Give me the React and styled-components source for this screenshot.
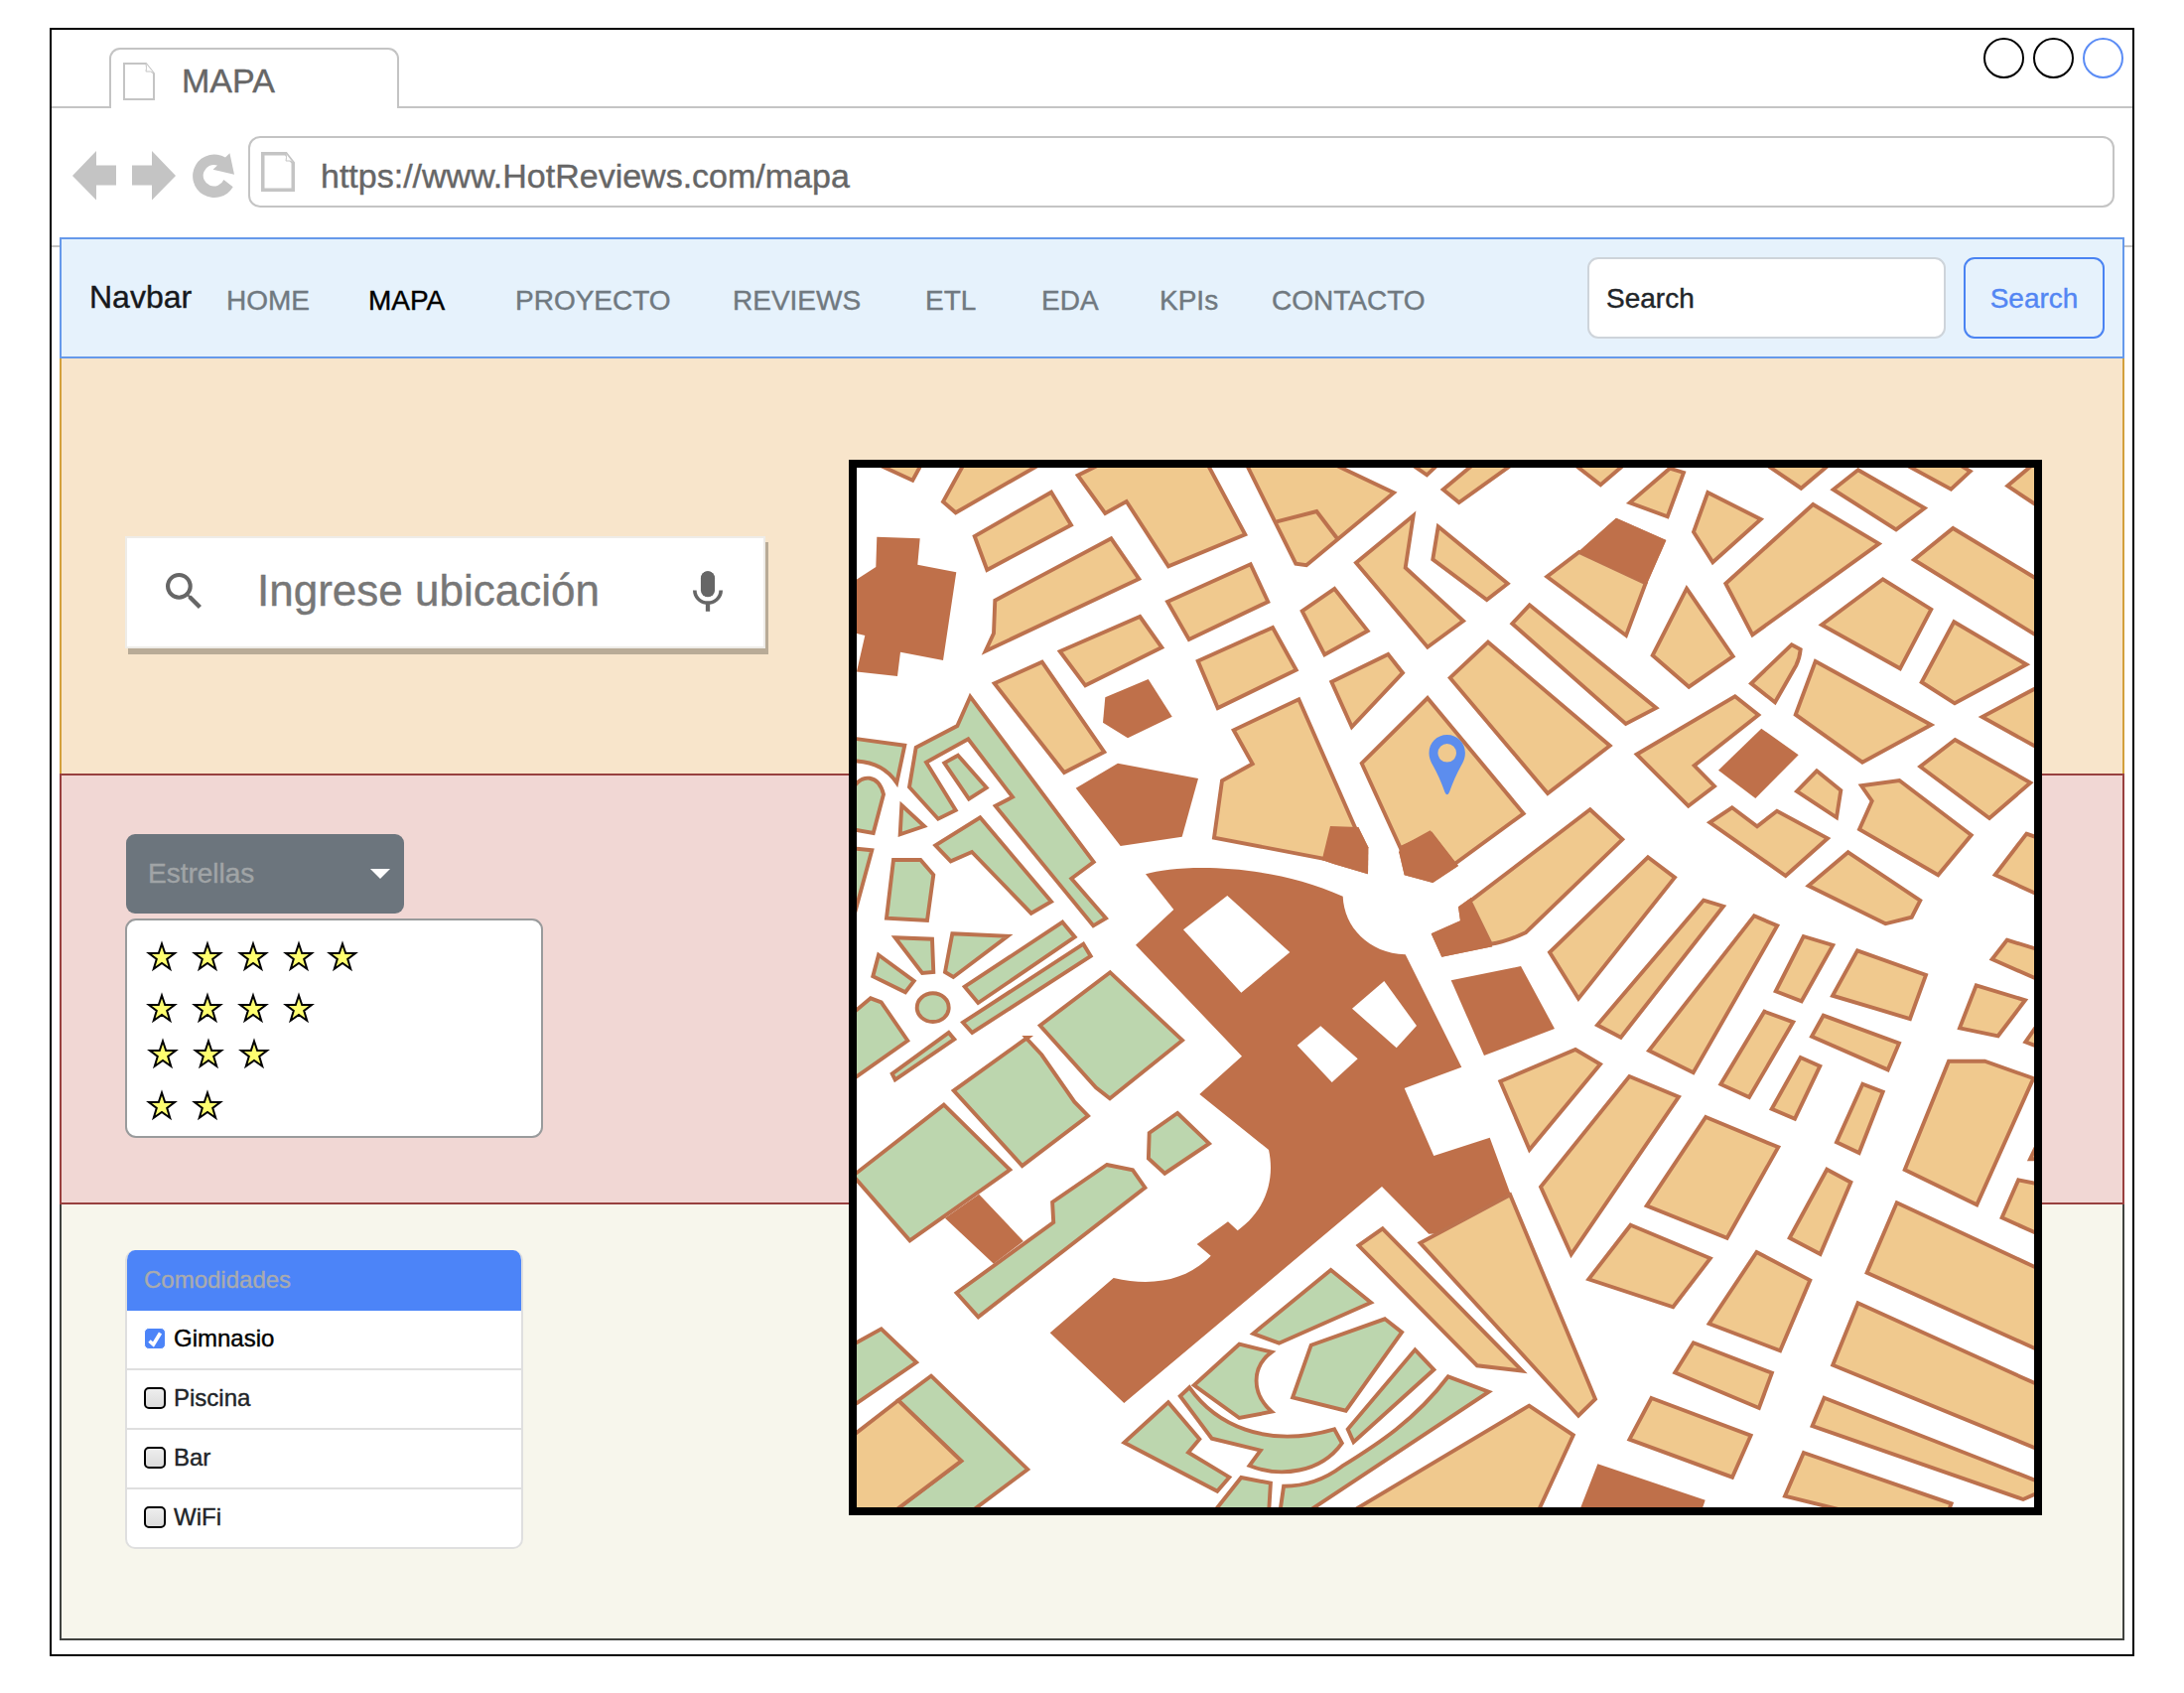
import React from "react";
import styled, { createGlobalStyle } from "styled-components";

const GlobalStyle = createGlobalStyle`
  *, *::before, *::after { box-sizing: border-box; }
  body {
    margin: 0;
    background: #ffffff;
    font-family: "Liberation Sans", Arial, Helvetica, sans-serif;
    -webkit-text-stroke: 0.4px;
  }
`;

/* ---------- Browser window ---------- */

const Page = styled.div`
  width: 2200px;
  height: 1705px;
  padding: 28px 50px 0;
  overflow: hidden;
`;

const BrowserWindow = styled.div`
  display: flex;
  flex-direction: column;
  height: 1640px;
  border: 2px solid #000;
  background: #fff;
`;

const TabStrip = styled.div`
  display: flex;
  align-items: flex-end;
  height: 79px;
`;

const StripStart = styled.div`
  width: 58px;
  border-bottom: 2px solid #c4c4c4;
`;

const Tab = styled.div`
  display: flex;
  align-items: center;
  width: 292px;
  height: 61px;
  padding: 4px 0 0 12px;
  border: 2px solid #c4c4c4;
  border-bottom: 0;
  border-radius: 11px 11px 0 0;
`;

const TabTitle = styled.span`
  margin: -1px 0 0 27px;
  font-size: 34px;
  line-height: 40px;
  color: #666;
`;

const StripEnd = styled.div`
  flex: 1;
  align-self: stretch;
  display: flex;
  justify-content: flex-end;
  gap: 9px;
  padding: 8px 9px 0 0;
  border-bottom: 2px solid #c4c4c4;
`;

const WindowButton = styled.span`
  width: 41px;
  height: 41px;
  border: 2px solid ${(p) => p.$color};
  border-radius: 50%;
`;

const Toolbar = styled.div`
  display: flex;
  align-items: flex-start;
  height: 140px;
  padding: 28px 18px 0 21px;
  border-bottom: 2px solid #c4c4c4;
`;

const ToolIcon = styled.svg`
  display: block;
  flex: none;
  margin-top: 15px;
  margin-right: ${(p) => p.$gap}px;
  fill: #c4c4c4;
`;

const AddressBar = styled.div`
  flex: 1;
  display: flex;
  align-items: center;
  height: 72px;
  padding-left: 11px;
  border: 2px solid #c4c4c4;
  border-radius: 12px;
`;

const Address = styled.span`
  margin: 8px 0 0 26px;
  font-size: 34px;
  line-height: 40px;
  color: #666;
`;

const DocSvg = styled.svg`
  display: block;
  flex: none;
  fill: #fff;
  stroke: #c4c4c4;
`;

function DocIcon({ width, height, weight }) {
  const h = weight / 2;
  return (
    <DocSvg width={width} height={height}>
      <path
        strokeWidth={weight}
        d={`M${h} ${h} H${width - 9} L${width - h} 11 V${height - h} H${h} Z`}
      />
      <path
        strokeWidth="1"
        d={`M${width - 9} ${h} Q${width - 8} 6 ${width - 9} 9 Q${width - 4} 8 ${width - h} 11`}
      />
    </DocSvg>
  );
}

/* ---------- Site ---------- */

const Site = styled.div`
  position: relative;
  display: flex;
  flex-direction: column;
  flex: none;
  width: 2080px;
  margin: -10px 0 0 8px;
`;

const Navbar = styled.nav`
  display: flex;
  align-items: flex-start;
  height: 122px;
  padding: 18px 18px 0 28px;
  border: 2px solid #6699ea;
  background: #e6f2fc;
`;

const Brand = styled.span`
  width: 138px;
  padding-top: 20px;
  font-size: 32px;
  line-height: 40px;
  color: #16191c;
`;

const NavLink = styled.span`
  width: ${(p) => p.$width}px;
  padding-top: 24px;
  font-size: 28px;
  line-height: 40px;
  white-space: nowrap;
  color: ${(p) => (p.$active ? "#000" : "#707980")};
`;

const SearchField = styled.div`
  width: 361px;
  height: 82px;
  margin-left: auto;
  padding: 19px 17px;
  border: 2px solid #ced4da;
  border-radius: 11px;
  background: #fff;
  font-size: 28px;
  line-height: 42px;
  color: #212529;
`;

const SearchButton = styled.div`
  width: 142px;
  height: 82px;
  margin-left: 18px;
  padding-top: 19px;
  border: 2px solid #4a83f2;
  border-radius: 11px;
  font-size: 28px;
  line-height: 42px;
  text-align: center;
  color: #5386f3;
`;

const LocationSection = styled.section`
  height: 418px;
  padding: 179px 0 0 64px;
  border: solid #d3a03c;
  border-width: 0 2px;
  background: #f8e5cb;
`;

const RatingSection = styled.section`
  height: 434px;
  padding: 59px 0 0 65px;
  border: 2px solid #98403f;
  background: #f1d7d4;
`;

const AmenitySection = styled.section`
  height: 439px;
  padding: 46px 0 0 64px;
  border: solid #40423f;
  border-width: 0 2px 2px;
  background: #f7f6ec;
`;

const LocationBox = styled.div`
  display: flex;
  align-items: center;
  width: 645px;
  height: 113px;
  padding: 0 41px 0 39px;
  border: 2px solid #eeece8;
  background: #fff;
  box-shadow: 3px 6px 0 #b9ab97;
`;

const LocationText = styled.span`
  flex: 1;
  margin-left: 56px;
  padding-bottom: 4px;
  font-size: 44px;
  line-height: 52px;
  color: #777;
`;

const GlyphIcon = styled.svg`
  display: block;
  flex: none;
  margin-bottom: 3px;
  fill: #666;
`;

const Dropdown = styled.div`
  display: flex;
  align-items: center;
  justify-content: space-between;
  width: 280px;
  height: 80px;
  padding: 0 14px 1px 22px;
  border-radius: 9px;
  background: #6c757d;
  font-size: 28px;
  color: #a0a4a6;
`;

const StarPanel = styled.div`
  width: 421px;
  height: 221px;
  margin: 5px 0 0 -1px;
  padding: 20px 0 0 19px;
  border: 2px solid #999b9c;
  border-radius: 11px;
  background: #fff;
`;

const StarRow = styled.div`
  display: flex;
  gap: 14px;
  height: 32px;
  margin-bottom: ${(p) => p.$after}px;
  margin-left: ${(p) => p.$indent || 0}px;
`;

const StarSvg = styled.svg`
  display: block;
  overflow: visible;
  fill: #ffff70;
  stroke: #000;
  stroke-width: 2;

  &:nth-child(5) { margin-left: -2px; }
`;

const AmenityList = styled.div`
  width: 401px;
  height: 301px;
  overflow: hidden;
  border: 2px solid #dfdfdf;
  border-top: 0;
  border-radius: 10px;
  background: #fff;
`;

const AmenityHeader = styled.div`
  height: 61px;
  margin: 0 -2px;
  padding: 10px 0 0 19px;
  background: #4c84f8;
  font-size: 24px;
  line-height: 40px;
  color: #a9abae;
`;

const AmenityRow = styled.div`
  display: flex;
  align-items: center;
  gap: 8px;
  height: 60px;
  padding: 0 0 2px 17px;
  border-bottom: 2px solid #dfdfdf;
  font-size: 24px;
  color: ${(p) => (p.$checked ? "#000" : "#212529")};

  &:last-child { border-bottom-color: transparent; }
`;

const CheckBox = styled.span`
  display: flex;
  width: 22px;
  height: 22px;
  border: ${(p) => (p.$checked ? "1px solid #fff" : "2px solid #000")};
  border-radius: 5px;
  background: ${(p) => (p.$checked ? "#4c84f8" : "linear-gradient(#eee, #dcdcdc)")};
`;

/* ---------- Map ---------- */

const MapFrame = styled.div`
  position: absolute;
  left: 795px;
  top: 224px;
  width: 1202px;
  height: 1063px;
  border: 8px solid #000;
  background: #fff;
`;

const MapSvg = styled.svg`
  display: block;
  width: 1186px;
  height: 1047px;

  .block { fill: #f0c98e; stroke: #bc724e; stroke-width: 3.9; }
  .park { fill: #bcd6ae; stroke: #bc724e; stroke-width: 3.9; }
  .civic { fill: #bf704a; }
  .court { fill: #fff; }
  .line { fill: none; stroke: #bc724e; stroke-width: 3.9; }
`;

/* Each sheet holds its shapes in its own units: origin (x, y), sx and sy units per pixel. */
const SHEETS = [
  {
    x: 850, y: 455, sx: 3, sy: 3,
    block: [
      "90,32 208,86 244,20",
      "372,20 300,151 338,184 624,20",
      "627,122 687,221 433,357 395,255",
      "808,262 892,384 428,602 453,548 457,449",
      "810,20 707,71 790,186 854,150 981,346 1213,250 1090,20",
      "978,453 1229,340 1282,453 1043,567",
      "895,498 961,591 730,706 653,603",
      "599,635 787,907 666,969 455,700",
      "1296,531 1367,659 1130,774 1070,632",
      "1375,748 1547,1140 1545,1150 1460,1231 1119,1166 1143,994 1235,943 1178,841",
    ],
    civic: [
      "790,742 920,687 992,800 858,865 783,818",
      "701,1016 828,941 1071,987 1022,1163 836,1191",
      "100,257 230,262 223,341 340,364 300,630 171,605 162,678 20,662 39,664 64,555 20,545 20,398 97,348",
    ],
    park: [
      "M20 865 L184 887 L160 1000 C130 955 85 933 20 934 Z",
      "M25 1020 C55 970 105 975 120 1035 L89 1152 L20 1140 Z",
      "382,740 343,828 218,893 198,1013 285,1109 338,1083 249,938 376,868 510,1043 458,1070 754,1432 792,1409 688,1289 755,1239",
      "345,917 431,1015 378,1049 304,940",
    ],
  },
  {
    x: 1250, y: 455, sx: 3, sy: 3,
    block: [
      "8,20 166,338 198,343 462,124 240,18",
      "490,20 562,70 615,20",
      "724,20 611,114 659,153 845,20",
      "521,193 348,335 564,590 672,511 497,350",
      "596,226 806,398 743,447 580,325",
      "283,414 383,541 253,613 185,481",
      "445,612 489,668 335,831 274,695",
      "872,463 1255,774 1163,822 820,519",
      "747,575 1115,888 927,1032 632,683",
      "1022,303 1223,397 1164,555 925,377",
      "985,20 1087,100 1180,20",
    ],
    civic: ["1134,200 1285,267 1227,399 1019,303"],
    line: ["M108 211 L229 180 L291 262"],
  },
  {
    x: 1650, y: 455, sx: 3, sy: 3,
    block: [
      "96,50 138,63 89,196 -25,154",
      "211,123 371,204 226,334 168,242",
      "147,413 287,618 154,710 44,615",
      "529,159 728,278 346,553 265,398",
      "360,20 493,110 600,20",
      "665,55 866,170 780,235 590,114",
      "775,20 946,113 1004,59 940,20",
      "1215,20 1117,103 1240,185",
      "952,231 1240,405 1240,577 834,326",
      "740,385 886,476 792,655 555,523",
      "955,514 1174,643 957,760 857,696",
      "M464 583 L491 597 Q488 625 478 645 L414 757 L342 700 Z",
      "536,633 886,825 678,938 476,794",
      "1240,694 1040,801 1240,912",
      "958,870 1186,1000 1062,1107 853,951",
      "293,739 364,795 170,948 231,1010 152,1070 -4,914",
      "540,964 613,1023 600,1105 480,1026",
    ],
    civic: ["373,836 485,916 355,1047 243,962"],
  },
  {
    x: 850, y: 800, sx: 3, sy: 3,
    park: [
      "175,33 243,96 170,121",
      "412,70 627,324 566,359 387,174 323,202 277,154",
      "85,169 30,370 10,370 10,161",
      "150,198 232,198 271,243 252,381 129,374",
      "155,433 267,437 271,537 237,540",
      "328,421 495,428 331,552 306,537",
      "105,485 212,564 186,598 88,550",
      "M221 644 C221 620 243 601 269 601 C296 601 317 620 317 644 C317 668 296 687 269 687 C243 687 221 668 221 644 Z",
      "661,386 698,431 406,630 365,581",
      "724,452 746,489 388,720 360,689",
      "317,720 334,740 155,862 146,844",
      "10,675 81,616 113,628 193,744 10,873",
      "805,538 1023,743 804,919 762,886 593,698",
      "552,737 598,787 697,929 738,971 539,1122 332,895",
    ],
    civic: ["538,729 573,729 553,745"],
  },
  {
    x: 1250, y: 800, sx: 3, sy: 3,
    block: [
      "564,-291 854,58 645,211 575,120 482,162 365,-94",
      "M1055 46 L1153 136 L860 418 Q800 446 755 452 L692 323 Z",
      "1230,190 1311,251 1020,617 933,477",
      "1011,771 1086,815 872,1073 784,867",
    ],
    civic: [
      "M-288 241 C-190 212 80 205 308 308 C312 400 385 480 497 484 L667 824 L494 888 L583 1092 L752 1037 L814 1205 L600 1327 L568 1328 L426 1185 L-353 1839 L-577 1627 L-385 1461 C-260 1490 -160 1465 -91 1394 L-133 1359 L-39 1291 L-10 1318 C70 1260 105 1170 84 1074 L-125 906 L3 791 L-318 455 L-203 348 Z",
      "270,96 355,99 385,160 384,241 280,210 245,198",
      "482,158 572,109 657,216 580,267 494,244 478,175",
      "657,340 696,312 698,330 760,460 607,491 575,421 663,382",
      "635,562 846,519 948,708 735,789",
    ],
    court: [
      "-41,306 148,477 1,599 -174,409",
      "433,564 531,699 470,766 336,647",
      "241,700 353,799 275,870 170,758",
    ],
  },
  {
    x: 1650, y: 800, sx: 3, sy: 3,
    block: [
      "198,320 258,338 -52,734 -123,697",
      "351,367 421,397 167,841 33,774",
      "-26,852 123,914 -202,1390 -294,1186",
      "205,975 424,1066 269,1340 26,1243",
      "1210,1050 1185,1102 1240,1102",
      "939,806 1048,806 1195,858 1024,1240 806,1134",
      "675,-26 790,-42 1007,123 907,244 669,106 707,20",
      "284,40 360,97 420,50 573,133 446,246 217,85",
      "635,175 853,321 827,371 748,391 515,276",
      "1174,119 1240,142 1240,317 1079,243",
      "1115,440 1240,478 1240,573 1070,498",
      "1022,577 1170,622 1088,730 972,706",
      "1230,664 1171,748 1240,775",
      "663,472 870,546 822,678 588,608",
      "500,429 589,456 494,625 416,595",
      "560,668 789,752 755,832 525,731",
      "382,656 469,688 336,915 250,876",
      "491,795 550,821 474,980 404,950",
      "679,875 740,899 668,1083 600,1051",
    ],
  },
  {
    x: 850, y: 1150, sx: 2.5705, sy: 3,
    civic: ["350,158 465,300 388,368 262,230"],
    park: [
      "259,-112 430,84 171,298 24,102",
      "864,-87 946,5 831,95 789,50 791,-27",
      "681,69 748,85 780,138 348,529 292,456 543,243 540,182",
      "10,621 97,565 188,666 10,808",
      "226,707 476,989 315,1130 115,1130 304,964 141,781",
      "1261,387 1365,485 1127,608 1060,579",
      "1401,535 1445,575 1300,812 1162,772 1210,614",
      "1479,628 1528,688 1320,907 1305,868",
      "M1024 611 L1108 635 C1055 680 1055 760 1108 815 L1024 834 L907 735 Z",
      "M895 742 C960 850 1090 930 1270 868 L1290 910 C1235 1000 1130 1015 1050 978 L1079 932 L953 896 L871 768 Z",
      "840,787 921,898 892,938 998,1013 967,1055 726,908",
      "1029,1014 1105,1031 1100,1130 950,1130",
      "M1565 709 L1670 755 L1185 1130 L1128 1130 L1139 1040 C1190 1040 1245 1020 1290 980 C1380 915 1480 840 1565 709 Z",
    ],
    block: ["10,899 141,781 304,964 115,1130 10,1130"],
  },
  {
    x: 1450, y: 1150, sx: 2.529, sy: 3,
    block: [
      "180,160 397,777 354,827 -49,305",
      "-145,262 211,692 96,676 -206,313",
      "228,797 341,886 246,1130 -242,1130",
      "487,251 690,352 595,499 380,415",
      "808,333 944,418 868,631 687,549",
      "647,607 847,698 814,804 600,697",
      "540,774 793,887 746,1013 484,899",
      "987,83 1048,122 970,339 892,290",
      "1165,184 1600,424 1600,668 1089,395",
      "1066,487 1600,774 1600,965 1002,674",
      "980,773 1560,1042 1487,1080 950,858",
      "928,939 1304,1093 1292,1130 1085,1130 880,1070",
      "1475,115 1560,136 1560,297 1433,229",
    ],
    civic: ["403,973 677,1082 665,1125 353,1125"],
  },
];

const LAYERS = ["civic", "park", "block", "line"];

function toPath({ x, y, sx, sy }, shape) {
  const source = shape.startsWith("M") ? shape : `M${shape.replace(/ /g, " L")} Z`;
  return source.replace(
    /(-?[\d.]+)[ ,](-?[\d.]+)/g,
    (_, px, py) => `${(x + px / sx).toFixed(1)} ${(y + py / sy).toFixed(1)}`
  );
}

/* Civic buildings that stand on top of a city block. */
const OVERLAYS = [
  [4, "civic", [1, 2, 3]],
  [1, "civic", [0]],
];

function CityMap() {
  return (
    <MapFrame>
      <MapSvg viewBox="863 471 1186 1047">
        {LAYERS.map((layer) =>
          SHEETS.map((sheet, s) =>
            (sheet[layer] || []).map((shape, i) => (
              <path key={`${layer}-${s}-${i}`} className={layer} d={toPath(sheet, shape)} />
            ))
          )
        )}
        {OVERLAYS.map(([s, layer, ids]) =>
          ids.map((i) => (
            <path key={`over-${s}-${i}`} className={layer} d={toPath(SHEETS[s], SHEETS[s][layer][i])} />
          ))
        )}
        {SHEETS[4].court.map((shape) => (
          <path key={shape} className="court" d={toPath(SHEETS[4], shape)} />
        ))}
        <path
          fill="#5c8dee"
          fillRule="evenodd"
          d="M1457.7 740 C1447.5 740 1439.5 748 1439.5 758.3 C1439.5 763 1441 766.5 1443.5 771 C1448 779 1452 788 1455.5 798 Q1457.7 802.5 1459.9 798 C1463.4 788 1467.4 779 1471.9 771 C1474.4 766.5 1475.9 763 1475.9 758.3 C1475.9 748 1467.9 740 1457.7 740 Z M1457.7 749 A9.3 9.3 0 1 1 1457.7 767.6 A9.3 9.3 0 1 1 1457.7 749 Z"
        />
      </MapSvg>
    </MapFrame>
  );
}

/* ---------- Content ---------- */

const NAV_LINKS = [
  { label: "HOME", width: 143 },
  { label: "MAPA", width: 148, active: true },
  { label: "PROYECTO", width: 219 },
  { label: "REVIEWS", width: 194 },
  { label: "ETL", width: 117 },
  { label: "EDA", width: 119 },
  { label: "KPIs", width: 113 },
  { label: "CONTACTO", width: 160 },
];

const STAR_ROWS = [
  { count: 5, after: 20 },
  { count: 4, after: 14 },
  { count: 3, after: 20, indent: 1 },
  { count: 2, after: 0 },
];

const AMENITIES = [
  { label: "Gimnasio", checked: true },
  { label: "Piscina" },
  { label: "Bar" },
  { label: "WiFi" },
];

function Star() {
  return (
    <StarSvg width="32" height="32" viewBox="0 0 32 32">
      <path d="M16 3.5 L19.2 13 H29 L21.2 18.9 L24.2 28.8 L16 22.9 L7.8 28.8 L10.8 18.9 L3 13 H12.8 Z" />
    </StarSvg>
  );
}

export default function App() {
  return (
    <Page>
      <GlobalStyle />
      <BrowserWindow>
        <TabStrip>
          <StripStart />
          <Tab>
            <DocIcon width={32} height={38} weight={2} />
            <TabTitle>MAPA</TabTitle>
          </Tab>
          <StripEnd>
            <WindowButton $color="#000" />
            <WindowButton $color="#000" />
            <WindowButton $color="#5b8cf5" />
          </StripEnd>
        </TabStrip>
        <Toolbar>
          <ToolIcon $gap={16} width="44" height="50">
            <path d="M0 25 L24 0 V14.5 H44 V34.5 H24 V49.5 Z" />
          </ToolIcon>
          <ToolIcon $gap={17} width="44" height="50">
            <path d="M44 25 L20 0 V14.5 H0 V34.5 H20 V49.5 Z" />
          </ToolIcon>
          <ToolIcon $gap={14} width="42" height="50" viewBox="0 -2 42 50">
            <path d="M40.7 34.3 A21.8 21.8 0 1 1 33 4.5 L37.4 0.3 L42 21.7 L20.5 16.7 L25 12.5 A10.8 10.8 0 1 0 31.4 27 Z" />
          </ToolIcon>
          <AddressBar>
            <DocIcon width={34} height={40} weight={3.5} />
            <Address>https://www.HotReviews.com/mapa</Address>
          </AddressBar>
        </Toolbar>
        <Site>
          <Navbar>
            <Brand>Navbar</Brand>
            {NAV_LINKS.map((link) => (
              <NavLink key={link.label} $width={link.width} $active={link.active}>
                {link.label}
              </NavLink>
            ))}
            <SearchField>Search</SearchField>
            <SearchButton>Search</SearchButton>
          </Navbar>
          <LocationSection>
            <LocationBox>
              <GlyphIcon width="36" height="36" viewBox="3 3 17.5 17.5">
                <path d="M15.5 14h-.79l-.28-.27A6.471 6.471 0 0 0 16 9.5 6.5 6.5 0 1 0 9.5 16c1.61 0 3.09-.59 4.23-1.57l.27.28v.79l5 4.99L20.49 19l-4.99-5zm-6 0C7.01 14 5 11.99 5 9.5S7.01 5 9.5 5 14 7.01 14 9.5 11.99 14 9.5 14z" />
              </GlyphIcon>
              <LocationText>Ingrese ubicación</LocationText>
              <GlyphIcon width="30" height="41" viewBox="5 2 14 19">
                <path d="M12 14c1.66 0 2.99-1.34 2.99-3L15 5c0-1.66-1.34-3-3-3S9 3.34 9 5v6c0 1.66 1.34 3 3 3zm5.3-3c0 3-2.54 5.1-5.3 5.1S6.7 14 6.7 11H5c0 3.41 2.72 6.23 6 6.72V21h2v-3.28c3.28-.48 6-3.3 6-6.72h-1.7z" />
                <rect x="8.7" y="2" width="6.6" height="12.2" rx="3.3" />
              </GlyphIcon>
            </LocationBox>
          </LocationSection>
          <RatingSection>
            <Dropdown>
              Estrellas
              <svg width="20" height="10">
                <path d="M0 0 H20 L10 10 Z" fill="#fff" />
              </svg>
            </Dropdown>
            <StarPanel>
              {STAR_ROWS.map((row) => (
                <StarRow key={row.count} $after={row.after} $indent={row.indent}>
                  {Array.from({ length: row.count }, (_, i) => (
                    <Star key={i} />
                  ))}
                </StarRow>
              ))}
            </StarPanel>
          </RatingSection>
          <AmenitySection>
            <AmenityList>
              <AmenityHeader>Comodidades</AmenityHeader>
              {AMENITIES.map((item) => (
                <AmenityRow key={item.label} $checked={item.checked}>
                  <CheckBox $checked={item.checked}>
                    {item.checked && (
                      <svg width="20" height="20">
                        <path d="M4.5 12.5 L8.5 16 L15.5 4.5" fill="none" stroke="#fff" strokeWidth="3.6" />
                      </svg>
                    )}
                  </CheckBox>
                  {item.label}
                </AmenityRow>
              ))}
            </AmenityList>
          </AmenitySection>
          <CityMap />
        </Site>
      </BrowserWindow>
    </Page>
  );
}
